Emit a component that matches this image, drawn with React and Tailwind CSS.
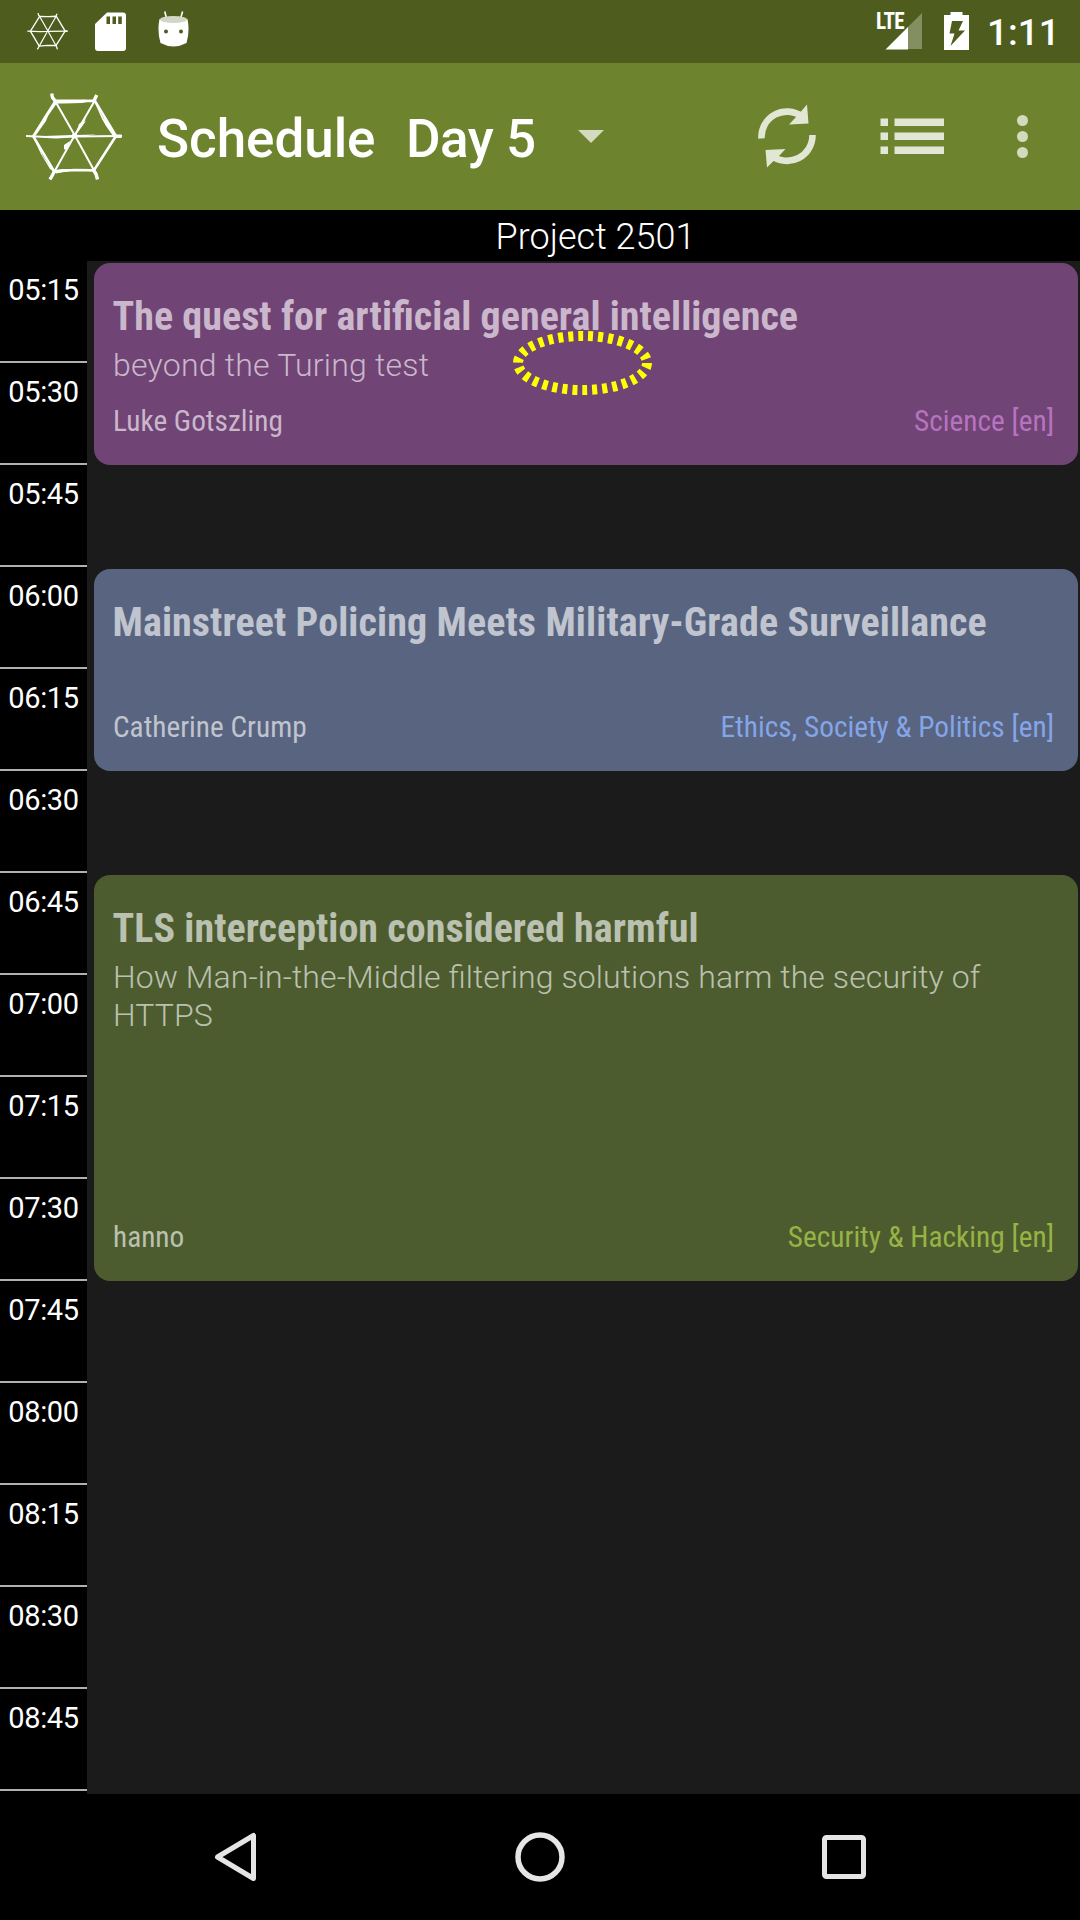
import React from "react";

const times = [
  "05:15", "05:30", "05:45", "06:00", "06:15", "06:30", "06:45", "07:00",
  "07:15", "07:30", "07:45", "08:00", "08:15", "08:30", "08:45",
];

const talks = [
  {
    title: "The quest for artificial general intelligence",
    subtitle: "beyond the Turing test",
    speaker: "Luke Gotszling",
    track: "Science [en]",
    box: "mt-[2px] h-[202px] bg-[#704474]",
    text: "text-[#cab7cc]",
    titleTracking: "tracking-[0.03px]",
    subtitleTracking: "tracking-[0.22px]",
    trackColor: "text-[#b873c0]",
  },
  {
    title: "Mainstreet Policing Meets Military-Grade Surveillance",
    subtitle: "",
    speaker: "Catherine Crump",
    track: "Ethics, Society & Politics [en]",
    box: "mt-[104px] h-[202px] bg-[#596480]",
    text: "text-[#c0c4cf]",
    titleTracking: "tracking-[0.1px]",
    subtitleTracking: "tracking-normal",
    trackColor: "text-[#84a5e8]",
  },
  {
    title: "TLS interception considered harmful",
    subtitle: "How Man-in-the-Middle filtering solutions harm the security of HTTPS",
    speaker: "hanno",
    track: "Security & Hacking [en]",
    box: "mt-[104px] h-[406px] bg-[#4d5c2e]",
    text: "text-[#bbc1b0]",
    titleTracking: "tracking-[0.04px]",
    subtitleTracking: "tracking-[0.08px]",
    trackColor: "text-[#97b345]",
  },
];

function WebLogo({ className, thin }) {
  return (
    <svg className={className} viewBox="0 0 96 88" fill="none" stroke="#fff">
      <path
        strokeWidth={thin ? 2.8 : 2}
        d="M29.300 8.300 48.700 42.300 68 77.300M68.700 7.700 48.700 42.300 28.300 78.700M0 43 30 44.500 48.700 43.500 96 43"
      />
      <path
        strokeWidth={thin ? 3.2 : 2.600}
        d="M29.300 8.300 49 8.500 68.700 7.700 90 43 68 77.300 48 77 28.300 78.700 7.300 43.300Z"
      />
      <path
        strokeWidth={thin ? 3 : 3.400}
        d="M25.700 0.500 26.500 4.500 30 9M70.700 2 67.500 9M90 43.300H95.500M67.500 77 70 81 71.500 86.500M28.500 78 26.500 82 24 86.500"
      />
      {!thin && (
        <g fill="#fff" stroke="none">
          <path d="M29 8 18 24 8 43 10 42 20 28 22 23 31 10Z" />
          <path d="M29 6.500 58 6.500 66 7.500 56 10 38 10.500 30 10.500Z" />
          <path d="M68 8 78 26 81 27 89 43 87 43 80 33 76 26Z" />
          <path d="M30 80.500 46 77 67 78.500 66 76 36 76 29 77Z" />
          <path d="M7 44 13 54 17 63 27 78 24 76 15 61Z" />
          <path d="M60 26 53 37 49 43 53 31Z" />
          <path d="M60 28 52 39 49 41 55 31ZM38 57 46 46 41 54ZM18 43 46 42 50 44 20 44ZM50 42 70 41.500 54 44ZM38 56 38 52 44 48 40 57Z" />
          <circle cx="48.700" cy="42.700" r="2.800" />
        </g>
      )}
    </svg>
  );
}

function StatusBar() {
  return (
    <div className="flex h-[63px] items-start bg-[#4e5d1e] text-white">
      <WebLogo thin className="ml-[27px] mt-[13px] h-[37px] w-[41px]" />
      <svg className="ml-[27px] mt-[12px] h-[39px] w-[31px]" viewBox="0 0 31 39">
        <path
          fill="#fff"
          fillRule="evenodd"
          d="M12 0.500H28Q31 0.500 31 3.500V36Q31 39 28 39H3Q0 39 0 36V12ZM11.500 4.500V12H15V4.500ZM17.500 4.500V12H21V4.500ZM23.200 4.500V12H26.800V4.500Z"
        />
      </svg>
      <svg className="ml-[32px] mt-[10px] h-[38px] w-[31px]" viewBox="0 0 31 38">
        <path d="M6.800 1.500 8.600 9M24.600 1.500 22.400 9" stroke="#fff" strokeWidth="1.600" />
        <path d="M1.500 9Q15.500 15 29.500 9 32 21 28.500 33 22 36.500 15.500 36.500T2.500 33Q-1 21 1.500 9Z" fill="#fff" />
        <ellipse cx="15.500" cy="9.500" rx="13.500" ry="3.400" fill="#d2d6c5" />
        <circle cx="8" cy="21.500" r="2" fill="#4e5d1e" />
        <circle cx="23" cy="21.500" r="2" fill="#4e5d1e" />
      </svg>
      <div className="relative ml-auto mt-[13px] h-[37px] w-[46px]">
        <svg className="h-[37px] w-[46px]" viewBox="0 0 46 37">
          <path d="M45 0V36H30V15Z" fill="#838e61" />
          <path d="M8.500 36.500 31 14V36.500Z" fill="#fff" />
        </svg>
        <span className="absolute -left-px top-0 origin-top-left scale-x-[0.92] font-['Roboto_Condensed','Roboto'] text-[23px] font-bold leading-[18px] tracking-[-0.6px] [font-stretch:75%]">
          LTE
        </span>
      </div>
      <svg className="ml-[21px] mt-[12px] h-[38px] w-[25px]" viewBox="0 0 25 38">
        <path
          fill="#fff"
          fillRule="evenodd"
          d="M6.500 0H18.500V3H25V38H0V3H6.500ZM8 9 5.500 21.500H10.500L6.500 34 21 18.500H14.500L19 9Z"
        />
      </svg>
      <span className="ml-[18px] mr-[22px] mt-[11px] w-[71px] whitespace-nowrap font-['Roboto'] text-[37px] font-[470] leading-[44px]">
        1:11
      </span>
    </div>
  );
}

function Toolbar() {
  return (
    <div className="flex h-[147px] items-start bg-[#6d832d] font-['Roboto'] text-white">
      <WebLogo className="ml-[26px] mt-[30px] h-[88px] w-[96px]" />
      <span className="ml-[35px] mt-[45px] w-[249px] whitespace-nowrap text-[53px] font-medium leading-[62px] tracking-[-0.05px]">Schedule</span>
      <span className="mt-[45px] w-[172px] whitespace-nowrap text-[53px] font-medium leading-[62px] tracking-[-0.5px]">Day 5</span>
      <svg className="mt-[67px] h-[13px] w-[26px]" viewBox="0 0 26 13">
        <path d="M0 0H26L13 13Z" fill="#d3dabf" />
      </svg>
      <svg className="ml-auto mt-[41px] h-[64px] w-[60px]" viewBox="0 0 60 64">
        <g fill="none" stroke="#e2e7d5" strokeWidth="6.600">
          <path d="M4.500 34.500A25.500 25.500 0 0 1 45 12.500" />
          <path d="M55.500 31A25.500 25.500 0 0 1 15 52" />
        </g>
        <path d="M50 0.500 51.500 19.500 32 20.500 39 13 44 7.500ZM10 63.500 8.500 46 28.500 45 22 52 16.500 57Z" fill="#e2e7d5" />
      </svg>
      <svg className="ml-[63px] mt-[55px] h-[36px] w-[64px]" viewBox="0 0 64 36" fill="#e2e7d5">
        <path d="M0.500 0.500H8V8H0.500ZM14.500 0.500H64V8H14.500ZM0.500 14.500H8V22H0.500ZM14.500 14.500H64V22H14.500ZM0.500 28.500H8V36H0.500ZM14.500 28.500H64V36H14.500Z" />
      </svg>
      <svg className="ml-[73px] mr-[52px] mt-[52px] h-[43px] w-[11px]" viewBox="0 0 11 43" fill="#d3dabf">
        <circle cx="5.500" cy="5.500" r="5.500" />
        <circle cx="5.500" cy="21.500" r="5.500" />
        <circle cx="5.500" cy="37.500" r="5.500" />
      </svg>
    </div>
  );
}

function TalkCard({ talk }) {
  return (
    <article className={`flex flex-col rounded-[16px] px-[19px] [font-feature-settings:'liga'_1] ${talk.box} ${talk.text}`}>
      <h2 className={`-ml-[0.5px] mt-[30px] whitespace-nowrap font-['Roboto_Condensed','Roboto'] text-[40px] font-bold leading-[47px] [font-stretch:75%] ${talk.titleTracking}`}>
        {talk.title}
      </h2>
      <p className={`mt-[6px] font-['Roboto'] text-[32px] font-light leading-[38px] ${talk.subtitleTracking}`}>{talk.subtitle}</p>
      <div className="mb-[26px] mt-auto flex justify-between pr-[5px] font-['Roboto_Condensed','Roboto'] text-[29.300px] leading-[35px] [font-stretch:75%]">
        <span>{talk.speaker}</span>
        <span className={talk.trackColor}>{talk.track}</span>
      </div>
    </article>
  );
}

export default function App() {
  return (
    <div className="h-[1920px] w-[1080px] overflow-hidden bg-black">
      <StatusBar />
      <Toolbar />
      <div className="h-[51px] pl-[111px] text-center font-['Roboto'] text-[36px] font-light leading-[55px] text-white">
        Project 2501
      </div>
      <div className="flex h-[1533px]">
        <div className="w-[87px]">
          {times.map((t) => (
            <div
              key={t}
              className="h-[102px] border-b-2 border-[#b0b0b0] pt-[12px] text-center font-['Roboto'] text-[29px] leading-[35px] tracking-[-0.3px] text-white"
            >
              {t}
            </div>
          ))}
        </div>
        <main className="relative flex-1 bg-[#1b1b1b] pl-[7px] pr-[2px]">
          <div className="flex flex-col">
            {talks.map((talk) => (
              <TalkCard key={talk.title} talk={talk} />
            ))}
          </div>
          <svg className="absolute left-[426px] top-[70px] h-[64px] w-[140px]" viewBox="0 0 140 64">
            <ellipse cx="69.500" cy="32" rx="64.500" ry="27" fill="none" stroke="#ff0" strokeWidth="10" strokeDasharray="5 5" />
          </svg>
        </main>
      </div>
      <nav className="flex h-[126px] items-center justify-center">
        <svg className="-ml-px h-[50px] w-[43px]" viewBox="0 0 43 50">
          <path d="M39.500 3.500V46.500L3.500 25Z" fill="none" stroke="#e5e5e5" strokeWidth="5" strokeLinejoin="round" />
        </svg>
        <svg className="ml-[258px] h-[50px] w-[50px]" viewBox="0 0 50 50">
          <circle cx="25" cy="25" r="22" fill="none" stroke="#e5e5e5" strokeWidth="5.500" />
        </svg>
        <svg className="ml-[257px] h-[44px] w-[44px]" viewBox="0 0 44 44">
          <rect x="2.500" y="2.500" width="39" height="39" rx="2" fill="none" stroke="#e5e5e5" strokeWidth="5" />
        </svg>
      </nav>
    </div>
  );
}
